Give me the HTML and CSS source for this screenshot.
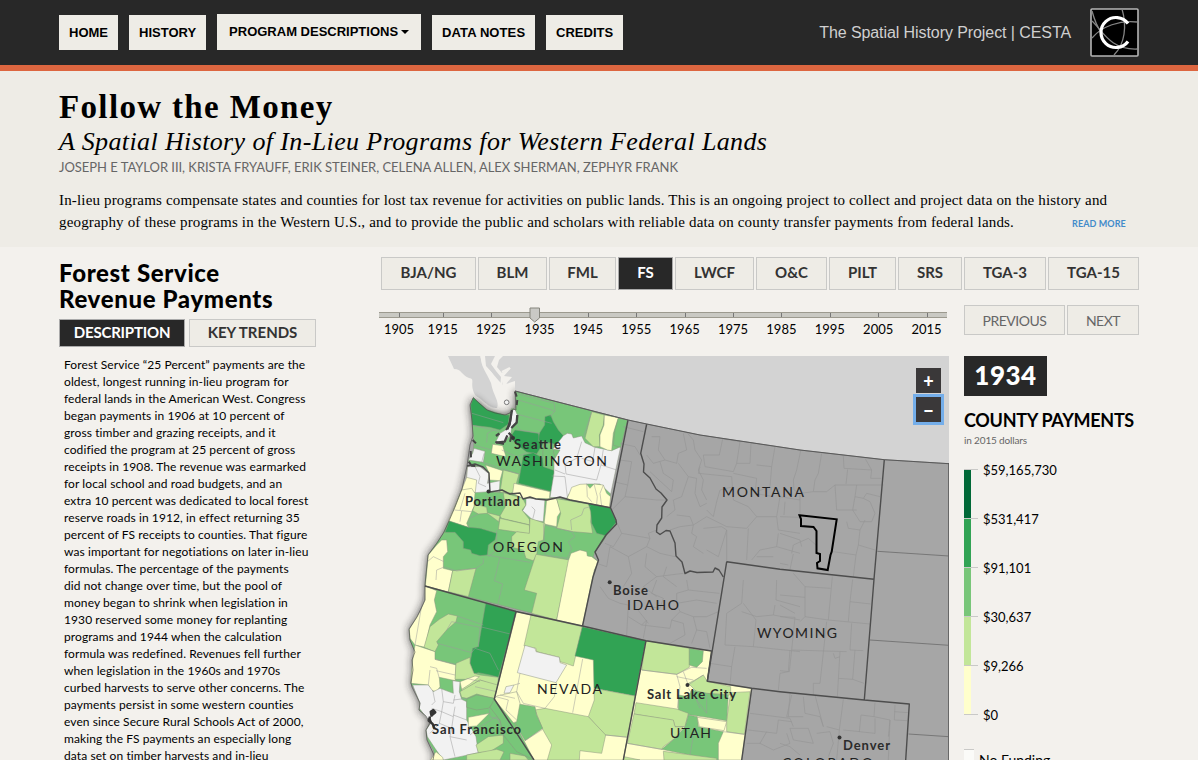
FILE: index.html
```html
<!DOCTYPE html>
<html lang="en">
<head>
<meta charset="utf-8">
<title>Follow the Money</title>
<link rel="stylesheet" href="styles.css">
</head>
<body>
<header class="topbar">
  <div class="wrap topbar-row">
    <nav class="nav">
      <a class="nav-item">HOME</a>
      <a class="nav-item">HISTORY</a>
      <a class="nav-item nav-drop">PROGRAM DESCRIPTIONS<span class="caret"></span></a>
      <a class="nav-item nav-notes">DATA NOTES</a>
      <a class="nav-item">CREDITS</a>
    </nav>
    <div class="brand">
      <span class="brand-name">The Spatial History Project | CESTA</span>
      <svg class="logo" viewBox="0 0 49 49">
        <rect x="1" y="1" width="47" height="47" rx="1" fill="#000" stroke="#b5b5b5" stroke-width="1.6"/>
        <g fill="none" stroke="#858585" stroke-width="1.3">
          <path d="M2 30C12 18 30 12 47 14"/><path d="M2 13C12 22 20 42 47 41"/><path d="M32 1C37 18 35 36 24 47"/><path d="M2 3C5 14 8 20 11 24"/>
        </g>
        <path d="M38 15.500A15 15 0 1 0 38 33.500" fill="none" stroke="#fff" stroke-width="3.200"/>
      </svg>
    </div>
  </div>
</header>

<section class="intro">
  <div class="wrap">
    <h1 class="title">Follow the Money</h1>
    <h2 class="subtitle">A Spatial History of In-Lieu Programs for Western Federal Lands</h2>
    <p class="authors">JOSEPH E TAYLOR III, KRISTA FRYAUFF, ERIK STEINER, CELENA ALLEN, ALEX SHERMAN, ZEPHYR FRANK</p>
    <div class="lead">
      <p class="lead-text">In-lieu programs compensate states and counties for lost tax revenue for activities on public lands. This is an ongoing project to collect and project data on the history and<br>geography of these programs in the Western U.S., and to provide the public and scholars with reliable data on county transfer payments from federal lands.</p>
      <a class="more">READ MORE</a>
    </div>
  </div>
</section>

<main class="wrap main">
  <aside class="side">
    <h3 class="side-title">Forest Service<br>Revenue Payments</h3>
    <div class="tabs">
      <button class="btn tab on">DESCRIPTION</button>
      <button class="btn tab">KEY TRENDS</button>
    </div>
    <p class="desc">Forest Service “25 Percent” payments are the<br>oldest, longest running in-lieu program for<br>federal lands in the American West. Congress<br>began payments in 1906 at 10 percent of<br>gross timber and grazing receipts, and it<br>codified the program at 25 percent of gross<br>receipts in 1908. The revenue was earmarked<br>for local school and road budgets, and an<br>extra 10 percent was dedicated to local forest<br>reserve roads in 1912, in effect returning 35<br>percent of FS receipts to counties. That figure<br>was important for negotiations on later in-lieu<br>formulas. The percentage of the payments<br>did not change over time, but the pool of<br>money began to shrink when legislation in<br>1930 reserved some money for replanting<br>programs and 1944 when the calculation<br>formula was redefined. Revenues fell further<br>when legislation in the 1960s and 1970s<br>curbed harvests to serve other concerns. The<br>payments persist in some western counties<br>even since Secure Rural Schools Act of 2000,<br>making the FS payments an especially long<br>data set on timber harvests and in-lieu</p>
  </aside>

  <div class="work">
    <div class="programs">
      <button class="btn">BJA/NG</button><button class="btn">BLM</button><button class="btn">FML</button><button class="btn on">FS</button><button class="btn">LWCF</button><button class="btn">O&amp;C</button><button class="btn">PILT</button><button class="btn">SRS</button><button class="btn">TGA-3</button><button class="btn">TGA-15</button>
    </div>
    <div class="timeline-row">
      <div class="timeline">
        <div class="track"><i></i><i></i><i></i><i></i><i></i><i></i><i></i><i></i><i></i><i></i><i></i><i></i>
          <svg class="handle" viewBox="0 0 12 16"><path d="M1 1H10.500V11L5.700 15L1 11Z" fill="#c9c9c5" stroke="#85857d"/></svg>
        </div>
        <div class="years"><span>1905</span><span>1915</span><span>1925</span><span>1935</span><span>1945</span><span>1955</span><span>1965</span><span>1975</span><span>1985</span><span>1995</span><span>2005</span><span>2015</span></div>
      </div>
      <div class="step">
        <button class="btn light prev">PREVIOUS</button><button class="btn light next">NEXT</button>
      </div>
    </div>

    <div class="map-row">
      <div class="map">
        <svg class="map-svg" viewBox="380 356 569 404">
          <defs>
            <filter id="glow" x="-10%" y="-10%" width="120%" height="120%">
              <feGaussianBlur stdDeviation="4"/>
            </filter>
            <path id="land" d="M473.300 397.700 480 404 487 410 495 413 505 415 510 413 513 409 516 410 515 391 628 420 646.700 424 700 435 800 450 884.300 459.700 949 463.700V770H431L434 755 427 740 426 730 430 723 426 716 419 710 420 703 412 687 411 683 413 670 412 660 415 652 410 640 409 629 417 617 425 600 425 585 427 565 428 555 437 543 444 532 449 521 455 507 462 489 467 466 470 445 473 436 472 420 470 405Z"/>
          </defs>

          <!-- Vancouver Island -->
          <path class="canada" d="M448 356H481C480 366 487 373 491 383 493 395 500 402 497 408 490 409 485 402 475 395 469 383 476 379 469 378 461 375 462 369 454 369 458 363Z"/>

          <use href="#land" class="shade" filter="url(#glow)"/>

          <!-- British Columbia mainland -->
          <path class="canada" d="M503 356 499 360 497 367 502 373 507 370 511 368 504 376 512 377 506 384 515 381 515 391 628 420 646.700 424 700 435 800 450 884.300 459.700 949 463.700V356Z"/>
          <path class="canada" d="M485 356H495L491 364 496 371 501 377 503 385 499 381 493 374 486 366Z"/>
          <path class="inlet" d="M481 356 484 366 491 373 497 383 501 393M499 356 493 366M502 376 501 390M506 380 505 386M510 368 502 372"/>

          <use href="#land" class="gray"/>

          <!-- Washington -->
          <g transform="translate(400 350) scale(.33333)" class="c">
            <path class="m" d="M220 143 240 162 262 180 285 190 315 195 330 190 335 175 345 178 350 165 345 123 683 210 657 300 632 420 628 473 500 448 440 452 368 445 335 430 268 425 268 370 250 352 215 347 205 335 220 300 222 275 218 240 215 200 212 165Z"/>
            <path class="p" d="M203 350 200 382 185 420 160 480 400 480 500 448 335 430 268 425Z"/>
            <path class="d" d="M220 143 262 180 315 195 328 195 325 222 300 240 270 232 217 226 214 190 212 165Z"/>
            <path class="n" d="M222 295 255 304 250 337 205 330 218 310Z"/>
            <path class="n" d="M203 350 240 350 268 372 262 400 300 392 298 425 268 425 256 442 225 435 230 390 200 382Z"/>
            <path class="p" d="M256 345 308 362 300 392 266 390 266 366Z"/>
            <path class="p" d="M278 283 308 287 318 320 274 310Z"/>
            <path class="l" d="M310 360 357 372 342 425 330 430 300 428Z"/>
            <path class="d" d="M345 240 415 250 418 262 430 280 410 312 380 306 345 280 330 262Z"/>
            <path class="d" d="M435 200 452 195 460 215 475 240 490 257 480 288 455 280 415 272 418 250 434 225Z"/>
            <path class="d" d="M370 315 400 308 430 325 466 338 455 425 355 400Z"/>
            <path class="m" d="M430 280 455 280 465 290 460 305 470 340 465 362 430 350 428 325Z"/>
            <path class="n" d="M490 257 502 250 515 252 520 264 545 258 555 278 585 292 635 302 662 290 632 432 600 402 560 402 508 430 500 445 450 442 462 370 462 330 480 300 458 298Z"/>
            <path class="l" d="M575 185 613 195 610 225 598 255 600 290 580 290 555 265Z"/>
            <path class="p" d="M613 195 655 203 640 250 635 302 622 300 600 290 600 255 612 225Z"/>
            <path class="m" d="M655 205 683 210 662 292 640 286 645 240Z"/>
            <path class="p" d="M508 430 515 412 540 403 560 402 570 415 582 402 610 405 620 430 632 440 628 473 500 448Z"/>
            <path class="p" d="M342 400 450 425 448 450 368 445 338 430Z"/>
            <path class="x" d="M216 190 310 218M217 226 300 245M355 150 450 178 465 185 463 160 349 130M342 190 455 220M350 225 360 240 420 250M463 185 450 200M248 337 355 372M280 240 262 250 260 278M220 285 275 300M245 337 252 310M575 187 550 262M330 262 345 280M305 300 350 320 380 308M545 275 530 325 495 342 498 372 590 390 603 345 650 360M585 292 578 335 545 325M603 345 610 298M465 360 495 372M455 378 495 380 502 440M560 402 562 440 575 455M582 402 592 440 590 462M610 405 600 430 605 468M225 350 240 380 235 400 258 410"/>
            <path class="n" d="M335 180 345 178 352 195 350 215 335 232 332 255 310 280 285 280 300 250 325 235 330 210Z"/>
            <path class="shore" d="M336 180 330 215 322 238M352 195 350 218 334 234M322 256 314 275 288 278M298 250 288 258M326 248 338 262"/>
            <path class="shoreline" d="M333 200 329 225 318 240M352 150 350 165M345 125 350 140M335 255 330 275M286 276 312 282M218 270 228 280M212 303 213 322M206 335 215 347 226 348"/>
            <circle cx="320" cy="157" r="7" fill="#f2f2f2" stroke="#777" stroke-width="3"/>
          </g>

          <!-- Oregon -->
          <g transform="translate(400 490) scale(.33333)" class="c">
            <path class="m" d="M185 0 165 50 146 93 130 130 110 160 85 195 82 220 77 260 75 288 547 408 578 262 583 240 595 215 580 200 585 185 612 150 620 135 650 100 648 90 630 53 500 27 368 25 335 10 268 5 225 8Z"/>
            <path class="p" d="M185 0 215 -5 225 10 222 50 215 65 200 100 205 112 145 93 165 50Z"/>
            <path class="l" d="M225 42 260 52 262 68 300 78 296 95 262 70 235 72 218 62Z"/>
            <path class="l" d="M310 8 368 25 378 45 366 60 388 88 390 105 305 85 300 78 316 50Z"/>
            <path class="l" d="M300 85 388 105 390 132 295 118Z"/>
            <path class="n" d="M378 25 435 27 430 95 398 90 368 62 378 45Z"/>
            <path class="p" d="M440 28 470 26 482 65 472 80 470 110 432 102 437 60Z"/>
            <path class="l" d="M470 26 565 42 575 60 572 95 578 130 520 125 470 115 482 70Z"/>
            <path class="d" d="M565 40 630 53 650 95 617 137 590 130 575 100 572 65Z"/>
            <path class="d" d="M148 93 205 112 240 115 290 130 285 150 265 165 262 195 240 197 215 190 212 180 190 175 190 155 165 127 135 127Z"/>
            <path class="l" d="M390 85 435 100 430 150 415 155 410 195 400 212 378 205 370 180 335 172 335 140 350 125 388 130Z"/>
            <path class="p" d="M125 150 140 150 143 185 130 200 130 235 158 242 145 306 76 288 82 225 85 195 110 165Z"/>
            <path class="l" d="M158 242 228 235 205 320 145 305Z"/>
            <path class="l" d="M408 193 508 210 470 390 395 370 410 310 373 300Z"/>
            <path class="p" d="M513 190 540 180 560 185 562 198 575 200 595 215 583 240 547 408 470 390 505 212Z"/>
            <path class="x" d="M260 195 300 202 390 217M300 202 283 272 308 282 293 345M130 230 170 243 228 235 250 220 250 205M205 112 208 85 235 72M430 100 435 195M435 105 515 125 525 140 505 155 515 175 500 210M290 120 290 180 265 200M82 215 100 200 132 215M108 270 110 240 130 232M163 60 185 62 180 95M195 10 180 60M186 62 215 65M515 120 512 90 545 75 552 55 572 50M398 88 405 60 395 50M256 20 285 25 300 50M435 195 505 205"/>
          </g>

          <!-- California and Nevada -->
          <g transform="translate(400 620) scale(.33333)" class="c">
            <path class="m" d="M75 -102 350 -27 283 237 402 420H92L105 410 100 390 82 360 78 330 92 310 80 290 58 270 60 250 45 210 32 190 35 150 38 120 45 95 30 60 28 30 50 -5 75 -40 76 -70Z"/>
            <path class="p" d="M75 -102 110 -88 103 -60 110 -25 90 15 75 82 45 75 30 55 28 28 60 -25 75 -60Z"/>
            <path class="l" d="M118 -2 145 -18 172 -12 168 5 140 30 110 65 115 75 105 95 72 82 90 20Z"/>
            <path class="d" d="M257 -50 350 -25 295 172 270 165 235 158 222 162 210 130 218 85 235 80Z"/>
            <path class="p" d="M45 75 105 95 105 118 168 135 166 182 118 172 120 200 110 215 95 212 85 195 33 190 38 120Z"/>
            <path class="l" d="M168 130 210 112 210 130 222 160 240 165 295 172 293 200 240 180 185 215 185 190 200 178 165 178Z"/>
            <path class="p" d="M180 185 225 168 238 170 210 192 185 208Z"/>
            <path class="n" d="M38 195 85 195 100 215 120 205 160 220 158 182 180 185 178 215 185 238 200 245 200 300 228 350 235 398 180 410 130 420 105 385 82 350 78 330 92 310 58 265 60 250Z"/>
            <path class="l" d="M180 215 240 180 293 195 287 237 230 222 200 235 185 232Z"/>
            <path class="m" d="M200 238 230 225 285 235 285 245 265 265 230 270 200 262Z"/>
            <path class="p" d="M205 292 268 280 230 318 205 320Z"/>
            <path class="l" d="M228 375 265 350 310 345 310 370 270 395 235 398Z"/>
            <path class="l" d="M200 405 290 388 312 395 300 420 200 420ZM330 400 375 408 385 420 330 420Z"/>
            <path class="p" d="M108 395 128 412 130 420 92 420Z"/>
            <path class="x" d="M75 -102 45 75M112 70 215 98 225 85 270 100 295 150M240 20 335 43M140 30 155 5 240 22 235 80M172 -12 250 15M105 118 165 132M108 152 165 165M90 140 110 145 118 175M85 195 90 150M98 210 105 245 95 255M125 205 130 245 160 250 165 225M130 245 125 275 160 290 165 260M95 265 125 275 118 310 155 325 160 290M155 325 150 350 200 360M200 300 160 285M150 350 165 410M118 310 90 340M240 320 290 290 300 310M268 265 270 290 300 300 310 350M200 235 160 240M225 200 290 215M240 320 210 345M200 175 240 185"/>
            <path class="bay" d="M92 275 100 270 106 277 98 284ZM90 290 86 302 98 312 103 325M92 276 95 290"/>
            <path class="p" d="M350 -25 738 62 670 420 402 420 283 237Z"/>
            <path class="l" d="M393 -15 547 20 520 138 497 130 480 125 478 112 410 95 408 85 372 78Z"/>
            <path class="n" d="M375 76 405 85 408 95 478 112 480 128 500 135 468 188 352 158Z"/>
            <path class="d" d="M547 20 738 62 705 228 582 205 580 120 525 108Z"/>
            <path class="l" d="M582 205 705 228 685 352 615 345 565 290 583 240Z"/>
            <path class="l" d="M405 270 435 265 565 290 617 345 605 400 540 392 538 420 442 420 455 375 428 328Z"/>
            <path class="m" d="M355 252 405 260 410 285 428 325 375 362 345 310 350 270Z"/>
            <path class="m" d="M283 237 345 310 402 420 350 395 310 345 300 300 270 262Z"/>
            <path class="p" d="M283 237 290 228 350 215 360 250 350 305 340 308Z"/>
            <path class="n" d="M318 200 342 195 330 218 312 220Z"/>
            <path class="x" d="M360 160 350 215 370 250 435 265 463 230 470 188M548 117 518 278M288 230 325 240 318 270 350 300M300 225 345 235M428 328 375 362M617 345 685 352M342 195 360 190"/>
          </g>

          <!-- Utah -->
          <g transform="translate(560 580) scale(.33333)" class="c">
            <path class="p" d="M258 182 455 213 442 304 575 325 545 540H190Z"/>
            <path class="l" d="M258 182 388 205 388 262 350 283 245 270Z"/>
            <path class="m" d="M388 205 430 212 427 245 410 262 388 255Z"/>
            <path class="l" d="M385 310 405 300 430 285 442 304 512 320 512 345 440 340 410 335Z"/>
            <path class="l" d="M512 338 570 335 553 463 500 455 500 420Z"/>
            <path class="m" d="M355 345 385 350 395 330 440 340 505 345 500 422 440 412 355 400Z"/>
            <path class="l" d="M228 368 350 387 385 400 375 440 345 440 340 422 222 402Z"/>
            <path class="l" d="M222 402 340 420 345 440 370 440 345 475 310 500 305 508 202 490Z"/>
            <path class="m" d="M385 405 412 410 415 440 490 455 475 490 475 540 390 525 305 508 345 475 375 440Z"/>
            <path class="p" d="M412 412 500 425 492 452 418 440Z"/>
            <path class="l" d="M310 514 470 535 470 540 312 540ZM192 530 240 540 190 540Z"/>
            <path class="x" d="M245 270 350 283 360 320 352 385M350 283 395 262 440 265M370 275 385 315 430 285M350 290 400 300M385 325 440 400 440 345M405 440 390 525M553 463 490 455M202 490 305 508M395 330 420 385"/>
          </g>

          <!-- Counties without receipts data -->
          <g class="x dim">
            <g transform="translate(560 400) scale(.33333)">
              <path d="M190 80 250 95M180 130 225 140 240 165M180 180 215 185 203 255 160 245M203 255 195 290 290 300 320 300M195 290 155 330M165 355 185 400 270 415 265 400 290 390M185 400 160 440 135 430M150 440 140 500 110 490M150 440 205 470 260 440 270 415M205 470 215 520 190 560M260 440 300 460 345 470M260 460 255 500 290 530 250 560 290 590M290 530 370 520M320 500 310 530 350 560"/>
              <path d="M275 110 300 110 295 150 315 180 350 190 355 160 380 150 370 100M380 97 400 120 405 150 425 180 415 210 430 240 425 270 440 300M300 185 310 220 340 240 335 275 270 215M315 180 280 190 260 165M355 190 385 230 365 290 340 300 345 330 320 350M385 230 410 235 405 280 420 320 440 310M488 117 478 165 430 165M488 117 540 125 530 190M430 165 435 200 520 215 530 190 570 190 573 130M420 200 415 220 515 230 520 300M520 220 590 235 585 280 640 290M590 195 635 200 630 260 590 275M645 140 635 200M470 305 480 270 520 260M470 305 460 350 440 330M350 345 390 350 400 375 440 350 500 380 560 385 590 350 565 320 520 300M590 350 650 350 655 390 720 400M330 390 360 380 400 375 395 400 410 410 400 440 430 460M430 385 485 380 500 390 475 470 440 450M500 390 500 485M565 385 560 480M655 400 650 440 600 450 575 480M590 470 640 470M650 440 720 460M650 350 660 290 720 300"/>
            </g>
            <g transform="translate(560 580) scale(.33333)">
              <path d="M120 20 145 55 180 70 205 75 200 165M205 110 245 135 260 120 250 175M245 135 330 145 335 120 370 130 375 165 330 190M335 120 360 95 400 110 410 150 440 155 450 205M360 95 350 70 410 60 470 70M400 110 440 110 475 95M410 150 395 190M380 0 385 30 350 40 350 70M385 30 430 35 478 40M290 0 275 40 310 55 300 85 270 80M230 85 265 130M550 0 545 70 500 100 495 195 580 200 588 120 550 70M545 95 590 110 640 105 720 120M650 0 648 60 720 80M640 105 645 75M580 200 720 215M525 200 515 260 450 250M515 260 510 315M690 210 685 275 660 280 655 330M570 400 690 415 700 440M565 450 650 460 655 420 695 425M690 340 685 410M620 455 600 490 640 510 690 490 680 460M560 490 600 490"/>
            </g>
            <g transform="translate(780 430) scale(.33333)">
              <path d="M62 62 50 120 40 150 42 180 60 190 60 250M125 70 115 130 105 150 100 185 60 190M100 185 140 185 165 165 170 240 230 240M165 165 230 165 310 165M190 78 192 115 275 120 255 85M203 118 198 162M275 120 272 145 305 145M230 165 225 200 250 205 260 190 300 200M225 200 218 240 240 275 275 275 285 250 270 215 250 205M200 275 205 295 240 300 255 270M240 300 235 345 285 360M235 345 228 375 220 440M160 365 228 375M0 260 60 262M15 215 12 255M0 310 60 330 65 350M35 370 40 345 85 325 108 345M40 372 30 418M0 400 25 405M40 430 75 470 75 560 60 575M75 470 152 475M157 440 145 570 270 582M218 448 210 515 272 522M210 515 205 575M75 560 145 570M0 495 75 502M0 525 45 550M0 560 45 562 35 660 200 665M140 575 130 668 120 760 100 760 100 795M215 580 210 660 250 662M35 660 28 725 0 722M180 665 172 800M160 670 165 685 180 680M225 660 218 748 175 745M218 748 252 760M35 795 20 860 70 860M70 800 75 850 120 860 130 890 105 795M190 808 178 900 140 890M285 818 282 860 243 855 238 905 285 910 285 865M282 860 330 870 325 920M345 825 343 870 382 872M343 845 385 848M240 905 190 900M330 870 325 990M0 940 30 950 60 975M30 895 40 930 100 940 85 895 30 895M110 910 150 905 160 940 145 980M178 900 170 990"/>
            </g>
          </g>

          <g class="states">
            <path d="M628 420 610.500 507.700 616 520 616.500 524 606 535 595 552 598.500 560 593 577 582.500 626"/>
            <path d="M425 586 516 611.500 582.500 626 646 640.700 711.500 651 707.300 681.300M516 611.500 494.300 699 534 760M646 640.700 623.300 760"/>
            <path d="M467 466 475 464 483 467 489 473 490 492 502 490 510 494 520 493 523 499 530 497 536 499 547 500 560 497 570 500 610.500 507.700"/>
            <path d="M646.700 424 640.700 453.300 644 464 643.500 472 650 478 656 489 661 493 667 500 662 507 661.700 518 657 525 656.500 532 660 534.500 666 530.500 670 531 675 543 676 556 682 562 685 573.500 690 571 697 572.500 713 572 715 568 719 570 723.300 577"/>
            <path d="M726.700 561.700 780 569.300 874 579.300M726.700 561.700 707.300 681.300 751.700 688.300 780 691.700 864.300 700 909.300 704 905.700 760M884.300 459.700 874 579.300 864.300 700M751.700 688.300 741.700 760"/>
          </g>
          <path class="thin" d="M515 391 628 420 646.700 424 700 435 800 450 884.300 459.700 949 463.700M948.500 463V760M877.300 551.300 949 556M870 640 949 645.300M908.500 734 949 736.700"/>
          <use href="#land" class="edge"/>
          <path class="picked" d="M799.500 515.300 836.700 519.300 831.700 551.700 830.500 555 827.700 570 817.500 568.300 817 563 820 561 820 554 816.500 553 816.500 531 813.500 527 801 526 801 519Z"/>

          <g class="dots"><circle cx="513" cy="438" r="2"/><circle cx="488.500" cy="491.500" r="2"/><circle cx="609.700" cy="582.300" r="2"/><circle cx="687.500" cy="685" r="2"/><circle cx="839.500" cy="737.500" r="2"/></g>
          <g class="city">
            <text x="514" y="449" textLength="47">Seattle</text>
            <text x="465" y="506" textLength="55">Portland</text>
            <text x="613" y="595" textLength="35">Boise</text>
            <text x="647" y="699" textLength="89">Salt Lake City</text>
            <text x="432" y="734" textLength="89">San Francisco</text>
            <text x="843" y="750" textLength="47">Denver</text>
          </g>
          <g class="state">
            <text x="496" y="466" textLength="111">WASHINGTON</text>
            <text x="493" y="552" textLength="70">OREGON</text>
            <text x="627" y="610" textLength="52">IDAHO</text>
            <text x="722" y="497" textLength="82">MONTANA</text>
            <text x="757" y="638" textLength="80">WYOMING</text>
            <text x="537" y="694" textLength="65">NEVADA</text>
            <text x="670" y="738" textLength="41">UTAH</text>
            <text x="782" y="768" textLength="91">COLORADO</text>
          </g>
        </svg>
        <div class="zoom"><button class="zoom-btn">+</button><button class="zoom-btn focus">−</button></div>
      </div>

      <div class="legend">
        <div class="year">1934</div>
        <h4 class="legend-title">COUNTY PAYMENTS</h4>
        <p class="legend-sub">in 2015 dollars</p>
        <ul class="scale">
          <li class="k k5">$59,165,730</li>
          <li class="k k4">$531,417</li>
          <li class="k k3">$91,101</li>
          <li class="k k2">$30,637</li>
          <li class="k k1">$9,266</li>
          <li class="k k0">$0</li>
        </ul>
        <div class="nofund"><i></i><span>No Funding</span></div>
      </div>
    </div>
  </div>
</main>
</body>
</html>
```
FILE: styles.css
```css
* { box-sizing: border-box; }
body { margin: 0; width: 1198px; height: 760px; overflow: hidden; background: #f3f1ed; font-family: Lato, "Open Sans", sans-serif; color: #000; }
h1, h2, h3, h4, p, ul { margin: 0; padding: 0; font-weight: normal; }
.wrap { width: 1080px; margin-left: 59px; }

.topbar { height: 71px; background: #282828; border-bottom: 6px solid #dd6640; }
.topbar-row { display: flex; justify-content: space-between; }
.nav { display: flex; align-items: flex-end; gap: 11px; height: 50px; }
.nav-item { height: 35px; padding: 0 10px; background: #eeece6; font: bold 13px/35px "Liberation Sans", Arial, sans-serif; white-space: nowrap; }
.nav-item:last-child { width: 77px; }
.nav-drop { width: 204px; height: 36px; padding: 0 0 0 12px; }
.nav-notes { width: 103px; letter-spacing: .1px; }
.caret { display: inline-block; margin-left: 3px; vertical-align: 2px; border: 4px solid transparent; border-top-color: #000; border-bottom: 0; }
.brand { display: flex; align-items: center; height: 65px; gap: 19px; }
.brand-name { font: 16px "Liberation Sans", Arial, sans-serif; letter-spacing: -.08px; color: #d0d0d0; }
.logo { width: 49px; height: 49px; }

.intro { height: 176px; padding-top: 17px; background: #eeece6; font-family: "Liberation Serif", Georgia, serif; }
.title { font-size: 33px; line-height: 38px; font-weight: bold; letter-spacing: 1.35px; white-space: nowrap; }
.subtitle { margin-top: 1px; font-size: 26px; line-height: 30px; font-style: italic; letter-spacing: .38px; white-space: nowrap; }
.authors { font: 13px/20px Lato, sans-serif; letter-spacing: -.035px; color: #666; white-space: nowrap; }
.lead { display: flex; align-items: flex-end; margin-top: 12px; }
.lead-text { width: 1013px; font-size: 15px; line-height: 22px; letter-spacing: .163px; white-space: nowrap; }
.more { font: bold 9px/18px Lato, sans-serif; letter-spacing: .1px; color: #428bca; white-space: nowrap; }

.main { display: flex; }
.side { width: 320px; padding-top: 13px; }
.side-title { font-size: 24px; line-height: 26px; font-weight: 900; letter-spacing: .65px; white-space: nowrap; }
.btn { height: 33px; padding: 0 0 3px; border: 1px solid #c9c9c7; background: #eeece6; color: #333; font: bold 15px Lato, sans-serif; white-space: nowrap; text-align: center; }
.btn.on { background: #282828; color: #fff; border-color: #aaa; }
.tabs { display: flex; gap: 4px; margin-top: 7px; }
.tab { width: 126px; height: 28px; padding-bottom: 2px; letter-spacing: -.2px; }
.tab + .tab { width: 127px; letter-spacing: 0; }
.desc { margin: 9px 0 0 5px; font-size: 12px; line-height: 17px; letter-spacing: .09px; white-space: nowrap; }

.work { width: 760px; padding-top: 10px; }
.programs { display: grid; grid-template-columns: 95px 69px 67px 55px 79px 71px 67px 64px 82px 91px; gap: 2px; margin-left: 2px; }
.timeline-row { display: flex; justify-content: space-between; padding-top: 15px; }
.timeline { width: 568px; padding-top: 7px; }
.track { position: relative; display: flex; height: 6px; padding-left: 20px; background: #c9c9c3; border: solid #9c9a8f; border-width: 1px 0; }
.track i { flex: none; width: 1px; margin-right: 47.4px; background: #777; }
.track i:first-child { margin-right: 42.600px; }
.track i:nth-child(12) { margin-right: 0; }
.handle { position: absolute; left: 150px; top: -6px; width: 12px; height: 16px; }
.years { display: flex; padding-left: 5px; margin-top: 3px; font-size: 13px; line-height: 16px; }
.years span { flex: none; width: 48.4px; }
.years span:first-child { width: 43.600px; }
.years span:last-child { width: 30px; }
.step { display: flex; gap: 2px; }
.light { height: 30px; padding: 1px 0 0; font-size: 14px; font-weight: normal; letter-spacing: -.5px; color: #666; }
.prev { width: 101px; }
.next { width: 72px; }

.map-row { display: flex; gap: 15px; margin-top: 21px; }
.step { height: 30px; }
.timeline-row { height: 45px; }
.map { position: relative; width: 569px; height: 404px; margin-left: 1px; }
.map-svg { display: block; width: 569px; height: 404px; }
.canada { fill: #d3d3d3; }
.inlet { fill: none; stroke: #f3f1ed; stroke-width: 2; }
.shade { fill: #222; opacity: .8; }
.gray { fill: #a6a6a6; }
.edge { fill: none; stroke: #444; stroke-width: .6; }
.c path { stroke: #8b9480; stroke-opacity: .75; stroke-width: 2; stroke-linejoin: round; }
.x, .c .x { fill: none; stroke: #999; stroke-width: 2; }
.dim path { stroke: #959595; }
.d { fill: #31a354; }
.m { fill: #78c679; }
.l { fill: #c2e699; }
.p { fill: #ffffcc; }
.n { fill: #f2f2f2; }
.c .shore { fill: none; stroke: #444; stroke-opacity: 1; stroke-width: 7; }
.c .shoreline { fill: none; stroke: #444; stroke-opacity: 1; stroke-width: 6; }
.c .bay { fill: #333; stroke: #333; stroke-opacity: 1; stroke-width: 7; }
.states { fill: none; stroke: #4d4d4d; stroke-width: 1.4; stroke-linejoin: round; }
.thin { fill: none; stroke: #777; stroke-width: 1; }
.picked { fill: none; stroke: #000; stroke-width: 2; }
.dots { fill: #333; }
.city { font: bold 13px Lato, sans-serif; fill: #2b2b2b; }
.state { font: 14px Lato, sans-serif; fill: #222; }
.zoom { position: absolute; left: 536px; top: 12px; display: grid; gap: 4px; }
.zoom-btn { width: 25px; height: 25px; padding: 0; border: 0; background: #3a3839; color: #fff; font: 900 18px/24px Lato, sans-serif; }
.focus { box-shadow: 0 0 0 3px #74aeea; }

.legend { width: 175px; }
.year { width: 83px; height: 40px; background: #282828; color: #fff; font-size: 26px; font-weight: 900; line-height: 39px; letter-spacing: .5px; text-align: center; }
.legend-title { margin-top: 12px; font-size: 18px; line-height: 24px; font-weight: bold; letter-spacing: -.3px; white-space: nowrap; }
.legend-sub { margin-top: 1px; font-size: 10px; line-height: 14px; letter-spacing: -.15px; color: #666; }
.scale { list-style: none; margin-top: 22px; }
.k { position: relative; display: flex; height: 49px; padding-left: 19px; font-size: 13px; line-height: 2px; }
.k::before { content: ""; position: absolute; left: 0; top: 0; width: 7px; height: 49px; background: var(--c); }
.k::after { content: ""; position: absolute; left: 0; top: 0; width: 14px; height: 1px; background: #c9c9c7; }
.k5 { --c: #006837; }
.k4 { --c: #31a354; }
.k3 { --c: #78c679; }
.k2 { --c: #c2e699; }
.k1 { --c: #ffffcc; }
.k0 { height: 35px; }
.nofund { display: flex; gap: 5px; font-size: 14px; line-height: 22px; }
.nofund i { width: 10px; height: 20px; background: #fbfbf8; border-top: 1px solid #c9c9c7; }
```
